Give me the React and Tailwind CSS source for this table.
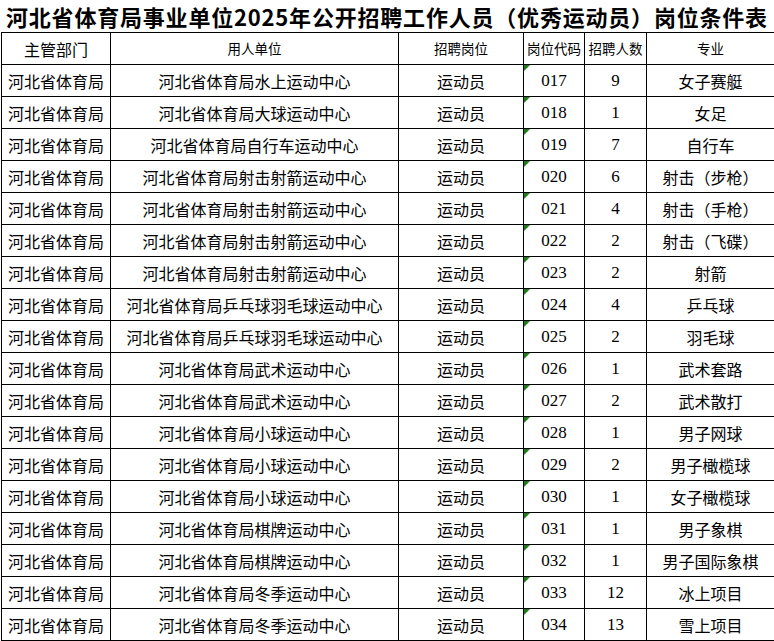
import React from 'react';

const rows = [
  ['河北省体育局水上运动中心', '017', '9', '女子赛艇'],
  ['河北省体育局大球运动中心', '018', '1', '女足'],
  ['河北省体育局自行车运动中心', '019', '7', '自行车'],
  ['河北省体育局射击射箭运动中心', '020', '6', '射击（步枪）'],
  ['河北省体育局射击射箭运动中心', '021', '4', '射击（手枪）'],
  ['河北省体育局射击射箭运动中心', '022', '2', '射击（飞碟）'],
  ['河北省体育局射击射箭运动中心', '023', '2', '射箭'],
  ['河北省体育局乒乓球羽毛球运动中心', '024', '4', '乒乓球'],
  ['河北省体育局乒乓球羽毛球运动中心', '025', '2', '羽毛球'],
  ['河北省体育局武术运动中心', '026', '1', '武术套路'],
  ['河北省体育局武术运动中心', '027', '2', '武术散打'],
  ['河北省体育局小球运动中心', '028', '1', '男子网球'],
  ['河北省体育局小球运动中心', '029', '2', '男子橄榄球'],
  ['河北省体育局小球运动中心', '030', '1', '女子橄榄球'],
  ['河北省体育局棋牌运动中心', '031', '1', '男子象棋'],
  ['河北省体育局棋牌运动中心', '032', '1', '男子国际象棋'],
  ['河北省体育局冬季运动中心', '033', '12', '冰上项目'],
  ['河北省体育局冬季运动中心', '034', '13', '雪上项目'],
];

const cell = 'border border-black text-center align-middle p-0 whitespace-nowrap';
const digits = { fontFamily: '"Liberation Serif", serif' };

export default function App() {
  return (
    <div
      className="w-[774px] h-[641px] bg-white text-black overflow-hidden"
      style={{ fontFamily: '"Noto Sans CJK SC", sans-serif' }}
    >
      {/* title */}
      <div className="h-[32px] flex items-center pl-[6px] text-[22px] font-bold tracking-[0.8px] leading-none whitespace-nowrap">
        河北省体育局事业单位2025年公开招聘工作人员（优秀运动员）岗位条件表
      </div>

      <table className="table-fixed border-collapse w-[773px] ml-px">
        <colgroup>
          <col className="w-[109px]" />
          <col className="w-[288px]" />
          <col className="w-[125px]" />
          <col className="w-[61px]" />
          <col className="w-[62px]" />
          <col className="w-[128px]" />
        </colgroup>
        <thead>
          <tr className="h-[32px]">
            <th className={`${cell} text-[16px] font-normal`}>主管部门</th>
            <th className={`${cell} text-[13.5px] font-normal`}>用人单位</th>
            <th className={`${cell} text-[13.5px] font-normal`}>招聘岗位</th>
            <th className={`${cell} text-[13.5px] font-normal`}>岗位代码</th>
            <th className={`${cell} text-[13.5px] font-normal`}>招聘人数</th>
            <th className={`${cell} text-[13.5px] font-normal`}>专业</th>
          </tr>
        </thead>
        <tbody className="text-[16px]">
          {rows.map(([unit, code, count, major]) => (
            <tr key={code} className="h-[32px]">
              <td className={cell}>河北省体育局</td>
              <td className={cell}>{unit}</td>
              <td className={cell}>运动员</td>
              <td className={`${cell} relative text-[17px]`} style={digits}>
                <span className="absolute left-0 top-0 w-0 h-0 border-t-[6px] border-r-[6px] border-t-[#1f7a1f] border-r-transparent" />
                {code}
              </td>
              <td className={`${cell} text-[17px]`} style={digits}>{count}</td>
              <td className={cell}>{major}</td>
            </tr>
          ))}
        </tbody>
      </table>
    </div>
  );
}
